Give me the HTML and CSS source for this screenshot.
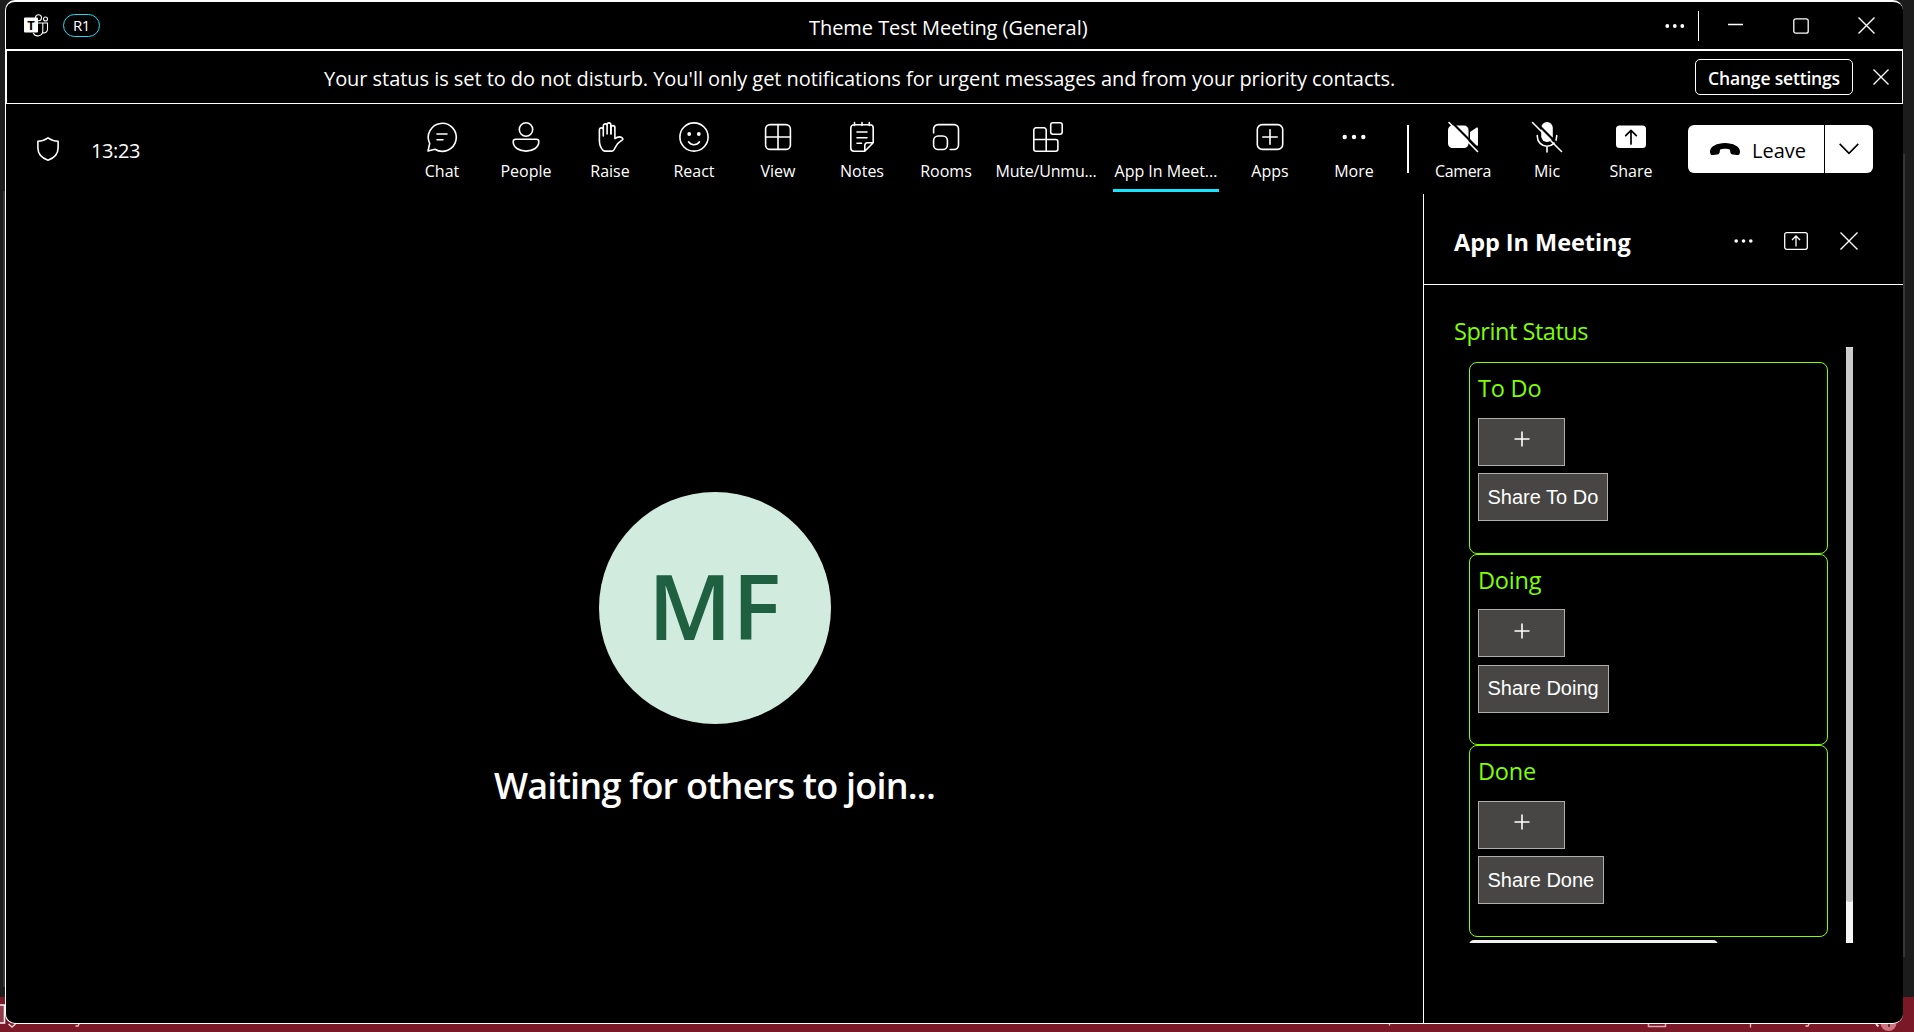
FILE: index.html
```html
<!DOCTYPE html>
<html lang="en">
<head>
<meta charset="utf-8">
<title>Theme Test Meeting (General)</title>
<link rel="stylesheet" href="styles.css">
</head>
<body>
<svg class="statusbar" viewBox="0 0 1914 35" aria-hidden="true">
  <rect width="1914" height="35" fill="#7a1828"/>
  <rect x="-4" y="8" width="8.500" height="18" fill="#8f3b49" stroke="#f4e9eb" stroke-width="1.600"/>
  <path d="M8.500 27l3.500 3 3.500-3" fill="none" stroke="#e8d0d4" stroke-width="1.500"/>
  <path d="M79.500 26l-1.500 3h-2.500M1809.500 26l-1.500 3h-2.500M1750.500 26v4.500M1389.500 26v2.500" fill="none" stroke="#e5cbb9" stroke-width="1.300"/>
  <path d="M1648.500 26v3.500h17V26" fill="none" stroke="#d8aab2" stroke-width="1.500"/>
  <path d="M1876 27l2.500 2.500" stroke="#e8d0d4" stroke-width="2"/>
  <circle cx="1888.500" cy="26" r="8" fill="#d0747f"/>
  <path d="M1889 26v4" stroke="#222" stroke-width="1.400"/>
</svg>
<div class="window">
  <header class="titlebar">
    <div class="brand">
      <svg class="teams" width="25" height="23" viewBox="0 0 25 23" fill="none" stroke="#fff" stroke-width="1.100">
        <circle cx="14.500" cy="3.800" r="3"/><circle cx="21.500" cy="5" r="2"/>
        <path d="M14 9h9.500v6.500a3.500 3.500 0 0 1-4.500 3.200M18.800 9v8a5 5 0 0 1-9.500 2"/>
        <rect x="0" y="3.500" width="14" height="15" rx="1" fill="#fff" stroke="none"/>
        <text class="teams-t" x="7" y="15.500" text-anchor="middle">T</text>
      </svg>
      <span class="pill">R1</span>
    </div>
    <h1 class="title">Theme Test Meeting (General)</h1>
    <div class="caption">
      <svg class="cap-dots" width="20" height="6" viewBox="0 0 20 6" fill="#fff"><circle cx="2.300" cy="3" r="1.900"/><circle cx="9.800" cy="3" r="1.900"/><circle cx="17.300" cy="3" r="1.900"/></svg>
      <i class="cap-rule"></i>
      <svg class="cap-min" width="15" height="17" viewBox="0 0 15 17" stroke="#fff" stroke-width="1.300"><path d="M0 7.500h15"/></svg>
      <svg class="cap-max" width="16" height="16" viewBox="0 0 16 16" fill="none" stroke="#fff" stroke-width="1.300"><rect x=".8" y=".8" width="14.400" height="14.400" rx="2"/></svg>
      <svg class="cap-close" width="17" height="17" viewBox="0 0 17 17" stroke="#fff" stroke-width="1.400"><path d="M.5.5l16 16M16.500.5l-16 16"/></svg>
    </div>
  </header>

  <div class="banner">
    <p class="banner-text">Your status is set to do not disturb. You'll only get notifications for urgent messages and from your priority contacts.</p>
    <button class="settings">Change settings</button>
    <svg class="banner-close" width="16" height="16" viewBox="0 0 16 16" stroke="#fff" stroke-width="1.400"><path d="M.5.5l15 15M15.500.5l-15 15"/></svg>
  </div>

  <nav class="toolbar">
    <div class="call-info">
      <svg class="shield" width="22" height="24" viewBox="0 0 22 24" fill="none" stroke="#fff" stroke-width="1.600" stroke-linejoin="round"><path d="M11 .9c3 2.200 6.300 3.200 10.100 3.400V11c0 6-3.600 9.900-10.100 12.200C4.500 20.900.9 17 .9 11V4.300C4.700 4.100 8 3.100 11 .9z"/></svg>
      <time class="clock">13:23</time>
    </div>
    <div class="tool"><svg class="ico" viewBox="0 0 30 30"><path d="M8 27.300L1 29l1.700-7.500A14 14 0 1 1 8 27.300zM10 12h10M10 17.700h6"/></svg><span>Chat</span></div>
    <div class="tool"><svg class="ico" viewBox="0 0 30 30"><circle cx="15" cy="7.500" r="6.700"/><path d="M4.700 17.300h20.600a2.500 2.500 0 0 1 2.500 2.500c0 5.500-5.500 9.300-12.800 9.300S2.200 25.300 2.200 19.800a2.500 2.500 0 0 1 2.500-2.500z"/></svg><span>People</span></div>
    <div class="tool"><svg class="ico" viewBox="0 0 30 30"><path d="M8.300 14V7.800a1.950 1.950 0 0 0-3.900 0V18.500c0 4 1.500 7.500 3.300 9.600.6.700 1.200 1 2 1h6.900c1 0 1.800-.5 2.300-1.300l2.300-4c.8-1.400 1.900-2.600 3.200-3.600l2.900-2.300c.9-.8.6-1.500-.2-2.100-2.200-1.500-4.500-1.200-7.200.8V5.500a1.900 1.900 0 0 0-3.800 0V12M8.300 8V3.800a1.900 1.900 0 0 1 3.800 0V12M12.100 4V2.700a1.850 1.850 0 0 1 3.700 0V12"/></svg><span>Raise</span></div>
    <div class="tool"><svg class="ico" viewBox="0 0 30 30"><circle cx="15" cy="15" r="14.100"/><path d="M9.500 19.800c2.800 3.900 8.200 3.900 11 0"/><circle class="solid" cx="10.200" cy="12" r="1.900"/><circle class="solid" cx="19.800" cy="12" r="1.900"/></svg><span>React</span></div>
    <div class="tool"><svg class="ico" viewBox="0 0 30 30"><rect x="2.600" y="2.600" width="24.800" height="24.800" rx="4.500"/><path d="M15 2.600v24.800M2.600 15h24.800"/></svg><span>View</span></div>
    <div class="tool"><svg class="ico" viewBox="0 0 30 30"><path d="M7.500.5v3M15 .5v3M22.300.5v3M17.800 29.200H7a3.200 3.200 0 0 1-3.200-3.200V6A3.200 3.200 0 0 1 7 2.800h16A3.200 3.200 0 0 1 26.200 6v14.800zM17.800 29.200V23.500a2.700 2.700 0 0 1 2.700-2.700h5.700M10 10h10M10 15.700h10M10 21.300h4.500"/></svg><span>Notes</span></div>
    <div class="tool"><svg class="ico" viewBox="0 0 30 30"><path d="M2.600 11V7.100a4.500 4.500 0 0 1 4.500-4.500H23a4.500 4.500 0 0 1 4.500 4.500V23a4.500 4.500 0 0 1-4.500 4.500h-3.800"/><rect x="2.600" y="14" width="13.800" height="13.500" rx="4.500"/></svg><span>Rooms</span></div>
    <div class="tool tool-mute"><svg class="ico" viewBox="0 0 30 30"><path d="M3 5.800h8a2.200 2.200 0 0 1 2.200 2.200v9.500h9.500a2.200 2.200 0 0 1 2.200 2.200v7.300a2.200 2.200 0 0 1-2.200 2.200H3A2.200 2.200 0 0 1 .8 27V8A2.200 2.200 0 0 1 3 5.800zM.8 17.500h12.400v11.700"/><rect x="17.700" y=".8" width="11.500" height="11.500" rx="2.200"/></svg><span>Mute/Unmu...</span></div>
    <div class="tool tool-active"><i class="ico"></i><span>App In Meet...</span></div>
    <div class="tool"><svg class="ico" viewBox="0 0 30 30"><rect x="2.300" y="2.600" width="25.400" height="24.800" rx="5"/><path d="M15 7.800v14.400M7.800 15h14.400"/></svg><span>Apps</span></div>
    <div class="tool"><svg class="ico" viewBox="0 0 30 30"><circle class="solid" cx="5.700" cy="15" r="2.200"/><circle class="solid" cx="15" cy="15" r="2.200"/><circle class="solid" cx="24.300" cy="15" r="2.200"/></svg><span>More</span></div>
    <i class="tool-rule"></i>
    <div class="tool tool-camera"><svg class="ico" viewBox="0 0 30 30"><rect class="solid" x="0" y="3.500" width="20.500" height="22.500" rx="4.500"/><path class="solid" d="M22 10l6-4c1.200-.8 2-.3 2 1v15.500c0 1.300-.8 1.800-2 1l-6-4z"/><path class="cut" d="M2.500-1l29 29"/><path d="M1 .5l28.500 29"/></svg><span>Camera</span></div>
    <div class="tool"><svg class="ico" viewBox="0 0 30 30"><rect class="solid" x="9.200" y="0" width="11.600" height="20" rx="5.800"/><path d="M5.300 13.500v1a9.700 9.700 0 0 0 19.400 0v-1M15 24.500V30"/><path class="cut" d="M2.500-1l29 29"/><path d="M.5.500l29 29"/></svg><span>Mic</span></div>
    <div class="tool"><svg class="ico" viewBox="0 0 30 30"><rect class="solid" x="0" y="3.500" width="30" height="22.500" rx="3.500"/><path class="dark" d="M15 22V8.500M9.700 13.700L15 8.300l5.300 5.400"/></svg><span>Share</span></div>
    <div class="leave">
      <button class="leave-main"><svg width="30" height="13" viewBox="0 0 30 13"><path d="M0 8.500C0 3.500 7 0 15 0s15 3.500 15 8.500c0 2.500-1 3.800-3.200 3.600l-4-.5c-1.600-.2-2.300-1-2.500-2.500l-.4-2.600c-1.400-.5-2.900-.7-4.900-.7s-3.500.2-4.900.7l-.4 2.600c-.2 1.500-.9 2.300-2.500 2.500l-4 .5C1 12.300 0 11 0 8.500z"/></svg><span>Leave</span></button>
      <button class="leave-more"><svg width="20" height="12" viewBox="0 0 20 12" fill="none" stroke="#000" stroke-width="1.600"><path d="M.7.900L10 10.300 19.300.9"/></svg></button>
    </div>
  </nav>

  <div class="content">
    <main class="stage">
      <div class="avatar">MF</div>
      <p class="waiting">Waiting for others to join...</p>
    </main>
    <aside class="panel">
      <div class="panel-head">
        <h2>App In Meeting</h2>
        <svg class="ph-dots" width="19" height="6" viewBox="0 0 19 6" fill="#fff"><circle cx="2.200" cy="3" r="1.800"/><circle cx="9.500" cy="3" r="1.800"/><circle cx="16.800" cy="3" r="1.800"/></svg>
        <svg class="ph-share" width="24" height="18" viewBox="0 0 24 18" fill="none" stroke="#fff" stroke-width="1.300"><rect x=".7" y=".7" width="22.600" height="16.600" rx="2"/><path d="M12 14.500V4M8 8l4-4 4 4"/></svg>
        <svg class="ph-close" width="18" height="18" viewBox="0 0 18 18" stroke="#fff" stroke-width="1.400"><path d="M.5.5l17 17M17.500.5l-17 17"/></svg>
      </div>
      <div class="app">
        <h3 class="app-title">Sprint Status</h3>
        <div class="scroll">
          <div class="cards">
            <section class="card"><h4>To Do</h4><button class="btn add"><svg width="16" height="16" viewBox="0 0 16 16"><path d="M8 .5v15M.5 8h15"/></svg></button><button class="btn">Share To Do</button></section>
            <section class="card card-doing"><h4>Doing</h4><button class="btn add"><svg width="16" height="16" viewBox="0 0 16 16"><path d="M8 .5v15M.5 8h15"/></svg></button><button class="btn share-doing">Share Doing</button></section>
            <section class="card"><h4>Done</h4><button class="btn add"><svg width="16" height="16" viewBox="0 0 16 16"><path d="M8 .5v15M.5 8h15"/></svg></button><button class="btn">Share Done</button></section>
            <div class="next-card"></div>
          </div>
          <div class="track"><div class="thumb"></div></div>
        </div>
      </div>
    </aside>
  </div>
</div>
</body>
</html>
```
FILE: styles.css
```css
* { box-sizing: border-box; }
html { height: 1032px; overflow: hidden; background: #1c1c1c; }
body {
  margin: 0;
  width: 1914px;
  height: 1032px;
  overflow: hidden;
  position: relative;
  color: #fff;
  font-family: "Open Sans", "Noto Sans", sans-serif;
  background:
    linear-gradient(#363636, #363636) 3px 191px / 2px 796px no-repeat,
    linear-gradient(#363636, #363636) 1903px 154px / 2px 803px no-repeat,
    #1c1c1c;
}
h1, h2, h3, h4, p { margin: 0; font-weight: 400; }
button { font: inherit; letter-spacing: inherit; padding: 0; margin: 0; color: inherit; }
svg { display: block; flex: none; }

.statusbar { position: absolute; left: 0; top: 997px; width: 1914px; height: 35px; }

.window {
  position: relative;
  width: 1898px;
  height: 1024px;
  margin-left: 5px;
  background: #000;
  border: 1px solid #fff;
  border-top-width: 2px;
  border-right: 0;
  border-radius: 10px;
  display: flex;
  flex-direction: column;
  overflow: hidden;
}

.titlebar { height: 47px; display: flex; align-items: center; flex: none; }
.brand { display: flex; align-items: center; padding-left: 18px; width: 803px; gap: 14px; flex: none; }
.teams-t { font: 700 13px "Open Sans", sans-serif; fill: #000; stroke: none; }
.pill {
  width: 37px; height: 23px; border: 1px solid #1fdcf5; border-radius: 12px;
  font-size: 15px; line-height: 20px; letter-spacing: -.4px; text-align: center;
}
.title { font-size: 20px; line-height: 30px; letter-spacing: -.05px; padding-top: 4px; white-space: nowrap; }
.caption { margin-left: auto; display: flex; align-items: center; padding-right: 28px; }
.cap-rule { width: 1px; height: 30px; background: #fff; margin-left: 13px; }
.cap-min { margin-left: 29px; }
.cap-max { margin-left: 50px; }
.cap-close { margin-left: 49px; }

.banner {
  height: 55px; flex: none; border: 1px solid #fff; border-top-width: 2px;
  display: flex; align-items: center;
}
.banner-text { flex: 1; padding: 3px 0 0 317px; font-size: 20px; line-height: 30px; letter-spacing: -.05px; white-space: nowrap; }
.settings {
  width: 158px; height: 36px; background: #000; border: 1px solid #fff; border-radius: 5px;
  font-size: 17.500px; font-weight: 600; line-height: 34px; letter-spacing: -.18px; padding-top: 1px;
}
.banner-close { margin: 0 13px 0 20px; }

.toolbar { height: 90px; flex: none; display: flex; align-items: flex-start; }
.call-info { width: 394px; display: flex; padding: 33px 0 0 31px; }
.shield { margin-right: 32px; }
.clock { font-size: 20px; line-height: 27px; letter-spacing: -.4px; }
.tool { width: 84px; height: 88px; padding-top: 18px; display: flex; flex-direction: column; align-items: center; flex: none; }
.tool span { font-size: 16px; line-height: 24px; margin-top: 7px; white-space: nowrap; }
.tool-mute { width: 116px; }
.tool-mute .ico { margin-left: 3px; }
.tool-mute span { letter-spacing: -.2px; }
.tool-camera span { letter-spacing: -.37px; }
.tool-active { width: 124px; background: linear-gradient(#15e5ff, #15e5ff) 50% 100% / 106px 3px no-repeat; }
.ico { width: 30px; height: 30px; overflow: visible; fill: none; stroke: #fff; stroke-width: 1.600; stroke-linecap: round; stroke-linejoin: round; }
.ico .solid { fill: #fff; stroke: none; }
.ico .cut { stroke: #000; stroke-width: 2.200; }
.ico .dark { stroke: #000; stroke-width: 1.700; }
.tool-rule { width: 2px; height: 48px; background: #fff; margin: 21px 12px 0 11px; }
.leave { width: 185px; height: 48px; margin: 21px 0 0 15px; display: flex; background: #fff; border-radius: 6px; overflow: hidden; color: #000; }
.leave button { border: 0; background: none; display: flex; align-items: center; }
.leave .leave-main { width: 137px; padding-left: 22px; gap: 12px; font-size: 20px; line-height: 28px; border-right: 1px solid #000; }
.leave-main span { padding-top: 4px; }
.leave .leave-more { flex: 1; justify-content: center; }

.content { flex: 1; display: flex; min-height: 0; }
.stage { flex: 1; display: flex; flex-direction: column; align-items: center; padding-top: 298px; }
.avatar {
  width: 232px; height: 232px; border-radius: 50%; background: #d1ebdf; color: #1e6040;
  font-size: 91px; font-weight: 600; line-height: 226px; letter-spacing: .4px; text-align: center;
}
.waiting { font-size: 36px; font-weight: 600; line-height: 50px; letter-spacing: -.78px; margin-top: 37px; }

.panel { width: 480px; border-left: 1px solid #fff; }
.panel-head { height: 91px; border-bottom: 1px solid #fff; display: flex; align-items: center; padding: 4px 45px 0 30px; }
.panel-head h2 { flex: 1; font-size: 23.500px; font-weight: 700; line-height: 34px; padding-top: 2px; letter-spacing: -.05px; }
.ph-share { margin-left: 31px; }
.ph-close { margin-left: 32px; }
.app { padding: 31px 0 0 30px; }
.app-title { font-size: 23.500px; line-height: 31px; letter-spacing: -.46px; color: #7fff00; }
.scroll { height: 596px; display: flex; overflow: hidden; }
.cards { width: 359px; margin: 15px 18px 0 15px; }
.card { height: 192px; border: 1px solid #7fff00; border-radius: 8px; padding: 9px 0 0 8px; color: #7fff00; }
.card h4 { font-size: 23.500px; line-height: 32px; height: 46px; letter-spacing: -.2px; }
.card-doing { height: 191px; }
.card-doing h4 { height: 45px; }
.btn {
  display: block; height: 48px; padding: 0 9px 0 8.500px; border: 1px solid #b0aeac; background: #484644; color: #fff;
  font: 20px/38px "Liberation Sans", Arial, sans-serif;
}
.share-doing { padding-bottom: 2px; }
.add { width: 87px; padding: 0 0 6px 34.500px; margin-bottom: 7px; }
.card-doing .add { margin-bottom: 8px; padding-bottom: 4px; }
.add path { stroke: #fff; stroke-width: 1.600; }
.next-card { width: 249px; height: 20px; margin-top: 3px; background: #f3f2f1; border-radius: 5px; }
.track { width: 7px; height: 596px; background: #f5f5f5; }
.thumb { height: 555px; background: #cbcbcb; border-radius: 3px; }
```
